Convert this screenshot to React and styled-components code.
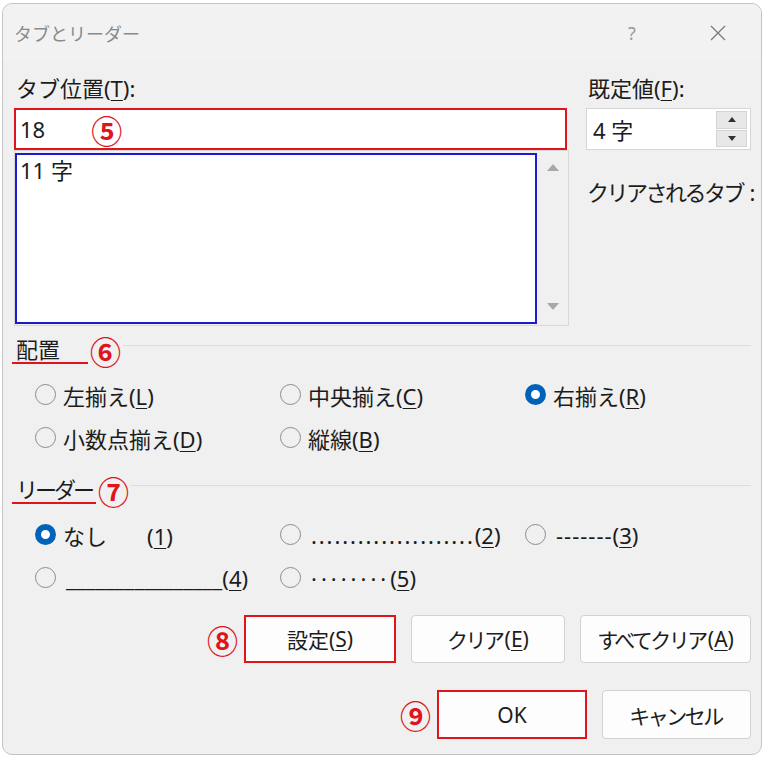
import styled, { createGlobalStyle } from "styled-components";

const RED = "#e0141c";

const GlobalStyle = createGlobalStyle`
  html, body {
    margin: 0;
    padding: 0;
    background: #ffffff;
  }
  body {
    font-family: "Noto Sans", "Noto Sans CJK JP", sans-serif;
    color: #1c1c1c;
  }
`;

const Window = styled.div`
  box-sizing: border-box;
  margin: 3px 0 0 2px;
  width: 760px;
  height: 752px;
  border: 1px solid #c4c4c4;
  border-radius: 10px;
  background: #f0f0f0;
  display: flex;
  flex-direction: column;
  overflow: hidden;
  font-size: 22px;
`;

const TitleBar = styled.div`
  height: 57px;
  display: flex;
  align-items: center;
  padding-left: 11px;
  background: #f2f2f2;
`;

const Title = styled.div`
  flex: 1;
  font-size: 18px;
  color: #8a8a8a;
`;

const TitleButton = styled.div`
  width: 86px;
  height: 100%;
  display: flex;
  align-items: center;
  justify-content: center;
  color: #9a9a9a;
  font-size: 18px;
`;

const Body = styled.div`
  flex: 1;
  display: flex;
  flex-direction: column;
  padding: 14px 10px 0 11px;
`;

const TopGrid = styled.div`
  display: grid;
  grid-template-columns: 555px 165px;
  column-gap: 17px;
`;

const Column = styled.div`
  display: flex;
  flex-direction: column;
`;

const FieldLabel = styled.div`
  line-height: 26px;
  margin: 0 0 7px 2px;
  white-space: nowrap;
`;

const TabInput = styled.div`
  box-sizing: border-box;
  width: 553px;
  height: 42px;
  border: 2px solid ${RED};
  background: #fff;
  display: flex;
  align-items: center;
  padding-left: 4px;
`;

const ListFrame = styled.div`
  box-sizing: border-box;
  height: 176px;
  border: 1px solid #d8d8d8;
  display: flex;
`;

const ListBox = styled.div`
  flex: 1;
  margin: 2px 0 1px 0;
  border: 2px solid #1a1ad0;
  background: #fff;
  padding: 2px 3px;
  line-height: 26px;
`;

const ScrollBar = styled.div`
  width: 31px;
  display: flex;
  flex-direction: column;
  align-items: center;
  justify-content: space-between;
  padding: 13px 0 15px;
`;

const Arrow = styled.span`
  width: 0;
  height: 0;
  border-left: ${(p) => p.$size}px solid transparent;
  border-right: ${(p) => p.$size}px solid transparent;
  ${(p) =>
    p.$down
      ? `border-top: ${p.$size + 1}px solid ${p.$color};`
      : `border-bottom: ${p.$size + 1}px solid ${p.$color};`}
`;

const SpinBox = styled.div`
  box-sizing: border-box;
  height: 42px;
  border: 1px solid #d6d6d6;
  background: #fff;
  display: flex;
  align-items: center;
  padding: 2px 3px 2px 6px;
`;

const SpinValue = styled.span`
  flex: 1;
`;

const SpinButtons = styled.div`
  width: 31px;
  height: 100%;
  display: flex;
  flex-direction: column;
  gap: 1px;
`;

const SpinButton = styled.div`
  flex: 1;
  background: #e8e8e8;
  border: 1px solid #d4d4d4;
  display: flex;
  align-items: center;
  justify-content: center;
`;

const ClearLabel = styled.div`
  margin: 29px 0 0 1px;
  line-height: 26px;
  white-space: nowrap;
  letter-spacing: -2.5px;
`;

const SectionHead = styled.div`
  display: flex;
  align-items: center;
  height: 30px;
  margin-top: ${(p) => p.$top}px;
`;

const HeadLabel = styled.span`
  box-sizing: border-box;
  min-width: 76px;
  margin-left: -2px;
  padding: 0 4px;
  line-height: 26px;
  border-bottom: 2px solid ${RED};
  letter-spacing: ${(p) => (p.$tight ? "-3px" : "0")};
`;

const Mark = styled.span`
  font-family: "Noto Sans CJK JP", sans-serif;
  font-weight: 700;
  font-size: 31px;
  line-height: 1;
  color: ${RED};
  margin-left: ${(p) => p.$gap ?? 2}px;
`;

const Rule = styled.div`
  flex: 1;
  height: 1px;
  background: #dcdcdc;
  align-self: flex-start;
  margin-top: 10px;
  margin-left: 2px;
`;

const RadioGrid = styled.div`
  display: grid;
  grid-template-columns: 245px 245px 1fr;
  grid-auto-rows: 43px;
  align-items: center;
  padding-left: 21px;
  margin-top: 8px;
`;

const Radio = styled.label`
  display: flex;
  align-items: center;
  gap: ${(p) => p.$gap ?? 7}px;
  white-space: nowrap;
`;

const Circle = styled.span`
  box-sizing: border-box;
  width: 21px;
  height: 21px;
  border-radius: 50%;
  flex-shrink: 0;
  border: ${(p) => (p.$on ? "6px solid #0062b9" : "1.5px solid #8c8c8c")};
  background: ${(p) => (p.$on ? "#fff" : "transparent")};
`;

const Key = styled.u`
  text-underline-offset: 3px;
  text-decoration-thickness: 1px;
`;

const Leader = styled.span`
  letter-spacing: ${(p) => p.$spacing}px;
`;

const Kana = styled.span`
  letter-spacing: -2.5px;
  margin-right: 2px;
`;

const Gap = styled.span`
  display: inline-block;
  width: ${(p) => p.$w}px;
`;

const ButtonRow = styled.div`
  display: flex;
  justify-content: flex-end;
  align-items: center;
  gap: 15px;
  margin-top: ${(p) => p.$top}px;
`;

const Marked = styled.div`
  display: flex;
  align-items: center;
  gap: 6px;
`;

const Button = styled.div`
  box-sizing: border-box;
  width: ${(p) => p.$w}px;
  height: ${(p) => p.$h}px;
  display: flex;
  align-items: center;
  justify-content: center;
  background: #fdfdfd;
  border: ${(p) => (p.$flag ? `2px solid ${RED}` : "1px solid #d2d2d2")};
  border-radius: ${(p) => (p.$flag ? 0 : 4)}px;
  font-size: 21px;
  white-space: nowrap;
`;

function CloseIcon() {
  return (
    <svg width="18" height="18" viewBox="0 0 18 18">
      <path d="M2 2 L16 16 M16 2 L2 16" stroke="#7a7a7a" strokeWidth="1.3" />
    </svg>
  );
}

export default function App() {
  return (
    <>
      <GlobalStyle />
      <Window>
        <TitleBar>
          <Title>タブとリーダー</Title>
          <TitleButton>?</TitleButton>
          <TitleButton>
            <CloseIcon />
          </TitleButton>
        </TitleBar>

        <Body>
          <TopGrid>
            <Column>
              <FieldLabel>
                タブ位置(<Key>T</Key>):
              </FieldLabel>
              <TabInput>
                18
                <Mark $gap={46}>⑤</Mark>
              </TabInput>
              <ListFrame>
                <ListBox>11 字</ListBox>
                <ScrollBar>
                  <Arrow $size={6} $color="#a8a8a8" />
                  <Arrow $size={6} $color="#a8a8a8" $down />
                </ScrollBar>
              </ListFrame>
            </Column>

            <Column>
              <FieldLabel>
                既定値(<Key>F</Key>):
              </FieldLabel>
              <SpinBox>
                <SpinValue>4 字</SpinValue>
                <SpinButtons>
                  <SpinButton>
                    <Arrow $size={4} $color="#333" />
                  </SpinButton>
                  <SpinButton>
                    <Arrow $size={4} $color="#333" $down />
                  </SpinButton>
                </SpinButtons>
              </SpinBox>
              <ClearLabel>クリアされるタブ&nbsp;&nbsp;:</ClearLabel>
            </Column>
          </TopGrid>

          <SectionHead $top={9}>
            <HeadLabel>配置</HeadLabel>
            <Mark>⑥</Mark>
            <Rule />
          </SectionHead>
          <RadioGrid>
            <Radio>
              <Circle />
              <span>
                左揃え(<Key>L</Key>)
              </span>
            </Radio>
            <Radio>
              <Circle />
              <span>
                中央揃え(<Key>C</Key>)
              </span>
            </Radio>
            <Radio>
              <Circle $on />
              <span>
                右揃え(<Key>R</Key>)
              </span>
            </Radio>
            <Radio>
              <Circle />
              <span>
                小数点揃え(<Key>D</Key>)
              </span>
            </Radio>
            <Radio>
              <Circle />
              <span>
                縦線(<Key>B</Key>)
              </span>
            </Radio>
          </RadioGrid>

          <SectionHead $top={16}>
            <HeadLabel $tight>リーダー</HeadLabel>
            <Mark>⑦</Mark>
            <Rule />
          </SectionHead>
          <RadioGrid>
            <Radio>
              <Circle $on />
              <span>
                なし
                <Gap $w={40} />
                (<Key>1</Key>)
              </span>
            </Radio>
            <Radio $gap={10}>
              <Circle />
              <span>
                <Leader $spacing={1.9}>.....................</Leader>(<Key>2</Key>)
              </span>
            </Radio>
            <Radio $gap={10}>
              <Circle />
              <span>
                <Leader $spacing={1}>-------</Leader>(<Key>3</Key>)
              </span>
            </Radio>
            <Radio $gap={10}>
              <Circle />
              <span>
                <Leader $spacing={0}>________________</Leader>(<Key>4</Key>)
              </span>
            </Radio>
            <Radio $gap={10}>
              <Circle />
              <span>
                <Leader $spacing={4}>········</Leader>(<Key>5</Key>)
              </span>
            </Radio>
          </RadioGrid>

          <ButtonRow $top={16}>
            <Marked>
              <Mark>⑧</Mark>
              <Button $w={152} $h={48} $flag>
                設定(<Key>S</Key>)
              </Button>
            </Marked>
            <Button $w={154} $h={48}>
              <Kana>クリア</Kana>(<Key>E</Key>)
            </Button>
            <Button $w={171} $h={48}>
              <Kana>すべてクリア</Kana>(<Key>A</Key>)
            </Button>
          </ButtonRow>

          <ButtonRow $top={27}>
            <Marked>
              <Mark>⑨</Mark>
              <Button $w={150} $h={49} $flag>
                OK
              </Button>
            </Marked>
            <Button $w={149} $h={49}>
              <Kana>キャンセル</Kana>
            </Button>
          </ButtonRow>
        </Body>
      </Window>
    </>
  );
}
